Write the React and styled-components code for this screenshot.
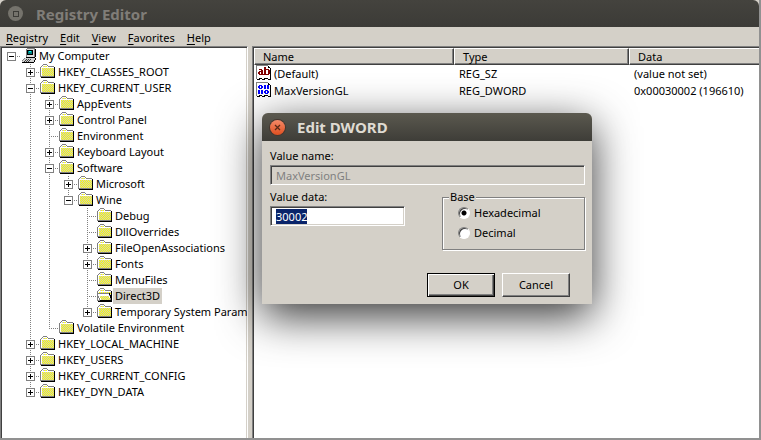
import React, { useEffect, useRef, useState } from 'react';
import styled, { createGlobalStyle, ThemeProvider } from 'styled-components';

const theme = {
   face: '#d4d0c8',
   light: '#ffffff',
   shadow: '#808080',
   dark: '#404040',
   text: '#000000',
   selection: '#0a246a',
   font: '"Noto Sans", "DejaVu Sans", sans-serif',
};

const GlobalStyle = createGlobalStyle`
   * {
      box-sizing: border-box;
   }
   body {
      margin: 0;
      font-family: ${({ theme }) => theme.font};
      font-size: 11px;
      line-height: 16px;
      color: ${({ theme }) => theme.text};
   }
   button, input {
      font: inherit;
      color: inherit;
   }
`;

const Window = styled.div`
   position: relative;
   display: flex;
   flex-direction: column;
   height: 100vh;
   background-color: ${({ theme }) => theme.face};
   border: solid #919191;
   border-width: 0 2px 2px 0;
   overflow: hidden;
`;

const TitleBar = styled.header`
   display: flex;
   align-items: center;
   flex: none;
   gap: ${({ $active }) => ($active ? '12px' : '13px')};
   height: ${({ $active }) => ($active ? '28px' : '27px')};
   padding: 0 8px;
   color: ${({ $active }) => ($active ? '#dfdbd2' : '#807d78')};
   background: ${({ $active }) => ($active ? 'linear-gradient(#5b594f, #3e3d38)' : 'linear-gradient(#44433e, #3c3b37)')};
   border-radius: 6px 6px 0 0;
   h1, h2 {
      margin: 0;
      font-size: 15px;
      line-height: 20px;
      font-weight: 700;
   }
`;

const WindowButton = styled.button`
   width: 15px;
   height: 15px;
   padding: 0;
   border: 0;
   border-radius: 50%;
   background: ${({ $close }) => ($close ? 'linear-gradient(#f58a68, #df4f20)' : '#75736c')};
   box-shadow: ${({ $close }) => ($close ? '0 0 0 1px #45362e' : 'none')};
   svg {
      display: block;
   }
`;

const MenuBar = styled.nav`
   display: flex;
   flex: none;
   gap: 12px;
   height: 19px;
   padding: 3px 6px 0;
   a {
      color: inherit;
      text-decoration: none;
   }
   u {
      text-underline-offset: 2px;
   }
`;

const Panes = styled.main`
   display: grid;
   grid-template-columns: 248px 1fr;
   column-gap: 4px;
   flex: 1;
   min-height: 0;
`;

const Pane = styled.section`
   min-width: 0;
   overflow: hidden;
   background-color: #fff;
   border-top: 1px solid ${({ theme }) => theme.shadow};
   border-left: 1px solid ${({ theme }) => theme.shadow};
   box-shadow: inset 1px 1px ${({ theme }) => theme.dark};
   padding: 1px 0 0 1px;
`;

const TreePane = styled(Pane)`
   border-right: 1px solid ${({ theme }) => theme.light};
   box-shadow: inset 1px 1px ${({ theme }) => theme.dark}, inset -1px 0 ${({ theme }) => theme.face};
   padding-right: 1px;
`;

const Tree = styled.ul`
   margin: 0;
   padding: 0;
   list-style: none;
`;

const TreeRow = styled.div`
   display: flex;
   height: 16px;
   white-space: nowrap;
   svg {
      flex: none;
   }
`;

const dots = (angle) => `repeating-linear-gradient(${angle}, #808080 0 1px, transparent 1px 2px)`;

const Guide = styled.span`
   display: flex;
   flex: none;
   width: 19px;
   height: 16px;
   padding: 4px 0 0 5px;
   background-image: ${dots('180deg')}, ${dots('180deg')}, ${dots('90deg')};
   background-repeat: no-repeat;
   background-position: 9px 0, 9px 8px, 9px 8px;
   background-size: ${({ $up, $down, $across }) => `1px ${$up ? 8 : 0}px, 1px ${$down ? 8 : 0}px, ${$across ? 10 : 0}px 1px`};
`;

const Toggle = styled.button`
   width: 9px;
   height: 9px;
   padding: 0;
   border: 1px solid ${({ theme }) => theme.shadow};
   background-color: #fff;
   svg {
      display: block;
   }
`;

const TreeLabel = styled.span`
   padding: 0 2px;
   background-color: ${({ theme, $selected }) => ($selected ? theme.face : 'transparent')};
`;

const ValueTable = styled.table`
   width: 100%;
   table-layout: fixed;
   border-collapse: separate;
   border-spacing: 0;
   th {
      height: 17px;
      padding: 0 0 0 8px;
      font-weight: 400;
      line-height: 14px;
      text-align: left;
      background-color: ${({ theme }) => theme.face};
      border: 1px solid ${({ theme }) => theme.dark};
      border-top-color: ${({ theme }) => theme.light};
      border-left-color: ${({ theme }) => theme.light};
      box-shadow: inset -1px -1px ${({ theme }) => theme.shadow};
   }
   th:last-child {
      border-right: 0;
      box-shadow: inset 0 -1px ${({ theme }) => theme.shadow};
   }
   td {
      height: 17px;
      padding: 0 0 0 5px;
      white-space: nowrap;
   }
   td:first-child {
      padding-left: 2px;
   }
`;

const Column = styled.col`
   width: ${({ $width }) => $width};
`;

const ValueName = styled.span`
   display: flex;
   gap: 2px;
   height: 17px;
   line-height: 17px;
`;

const Dialog = styled.div`
   position: absolute;
   left: 262px;
   top: 113px;
   width: 330px;
   background-color: ${({ theme }) => theme.face};
   border-radius: 6px 6px 0 0;
   box-shadow: 0 12px 44px rgba(0, 0, 0, 0.8);
`;

const Form = styled.form`
   display: grid;
   grid-template-columns: 135px 143px;
   justify-content: space-between;
   padding: 7px 7px 7px 8px;
`;

const Field = styled.div`
   display: flex;
   flex-direction: column;
   grid-column: ${({ $wide }) => ($wide ? '1 / -1' : 'auto')};
   padding-bottom: 4px;
   gap: 1px;
`;

const TextBox = styled.input`
   width: 100%;
   height: 20px;
   padding: 0 5px;
   border: 1px solid;
   border-color: ${({ theme }) => `${theme.shadow} ${theme.light} ${theme.light} ${theme.shadow}`};
   border-radius: 0;
   outline: none;
   background-color: ${({ theme, readOnly }) => (readOnly ? theme.face : '#fff')};
   color: ${({ theme, readOnly }) => (readOnly ? theme.shadow : theme.text)};
   box-shadow: inset 1px 1px ${({ theme }) => theme.dark}, inset -1px -1px ${({ theme }) => theme.face};
   &::selection {
      color: #fff;
      background-color: ${({ theme }) => theme.selection};
   }
`;

const GroupBox = styled.fieldset`
   display: flex;
   flex-direction: column;
   gap: 4px;
   height: 61px;
   margin: 0;
   padding: 0 15px;
   border: 1px solid ${({ theme }) => theme.shadow};
   box-shadow: 1px 1px ${({ theme }) => theme.light}, inset 1px 1px ${({ theme }) => theme.light};
   legend {
      margin-left: -9px;
      padding: 0 1px;
      background-color: ${({ theme }) => theme.face};
   }
`;

const RadioLabel = styled.label`
   display: flex;
   align-items: center;
   gap: 4px;
   height: 16px;
`;

const Radio = styled.input`
   appearance: none;
   width: 12px;
   height: 12px;
   margin: 0;
   border: 1px solid;
   border-color: ${({ theme }) => `${theme.shadow} ${theme.light} ${theme.light} ${theme.shadow}`};
   border-radius: 50%;
   background-color: #fff;
   box-shadow: inset 1px 1px ${({ theme }) => theme.dark};
   &:checked {
      background-image: radial-gradient(circle, #000 2px, transparent 3px);
   }
`;

const Actions = styled.div`
   display: flex;
   justify-content: flex-end;
   grid-column: 1 / -1;
   gap: 7px;
   padding: 23px 15px 0 0;
`;

const PushButton = styled.button`
   width: 68px;
   height: 24px;
   padding: 0;
   border: 1px solid;
   border-color: ${({ theme, $primary }) => ($primary ? '#000' : `${theme.light} ${theme.dark} ${theme.dark} ${theme.light}`)};
   border-radius: 0;
   background-color: ${({ theme }) => theme.face};
   box-shadow: ${({ theme, $primary }) => ($primary
      ? `inset 1px 1px ${theme.light}, inset -1px -1px ${theme.dark}, inset -2px -2px ${theme.shadow}`
      : `inset -1px -1px ${theme.shadow}`)};
`;

const FolderIcon = ({ open }) => (
   <svg width="16" height="16" viewBox="0 0 16 16" shapeRendering="crispEdges">
      <defs>
         <pattern id="dither" width="2" height="2" patternUnits="userSpaceOnUse">
            <rect width="2" height="2" fill="#ffff00" />
            <rect x="1" width="1" height="1" fill="#c8c8c8" />
            <rect y="1" width="1" height="1" fill="#c8c8c8" />
         </pattern>
      </defs>
      <path d="M0 3h1V2h1V1h1V0h4v1h1v1h6v11H0z" fill="#808080" />
      <path d="M1 3h13v9H1zM2 2h6v1H2zM3 1h4v1H3z" fill="#fff" />
      <path d="M2 4h12v8H2zM3 2h4v1H3z" fill="url(#dither)" />
      <path d="M14 3h1v11H1v-1h13z" fill="#000" />
      {open && (
         <>
            <path d="M0 5h12v1h1v3h1v3h1v1H3v-1H2v-2H1V7H0z" fill="#808080" />
            <path d="M1 6h11v2h1v4H3v-2H2V8H1z" fill="#fff" />
            <path d="M3 8h9v2h1v2H4v-2H3z" fill="url(#dither)" />
            <path d="M12 5h1v2h1v3h1v3H3v-1h11v-2h-1V7h-1z" fill="#000" />
         </>
      )}
   </svg>
);

const ComputerIcon = () => (
   <svg width="16" height="16" viewBox="0 0 16 16" shapeRendering="crispEdges">
      <path d="M5 1h1V0h8v9H5z" fill="#808080" />
      <path d="M6 1h7v8H6z" fill="#e0e0e0" />
      <path d="M6 2h6v5H6z" fill="#000" />
      <path d="M7 3h4v3H7z" fill="#008080" />
      <path d="M8 3h2v1H8z" fill="#00ffff" />
      <path d="M14 1h1v8h-1zM5 9h9v1H5z" fill="#000" />
      <path d="M4 10h10v1H4zM3 11h11v1H3zM2 12h11v1H2zM1 13h12v1H1z" fill="#d0d0d0" />
      <path d="M3 10h1v1H3zM2 11h1v1H2zM1 12h1v1H1z" fill="#808080" />
      <path d="M5 11h1v1H5zM7 11h1v1H7zM9 11h1v1H9zM4 12h1v1H4zM6 12h1v1H6zM8 12h1v1H8zM3 13h1v1H3zM5 13h1v1H5zM7 13h1v1H7z" fill="#404040" />
      <path d="M1 14h12v1H1zM13 12h1v2h-1zM14 10h1v2h-1z" fill="#000" />
   </svg>
);

const ValueIcon = ({ binary }) => (
   <svg width="16" height="16" viewBox="0 0 16 16" shapeRendering="crispEdges">
      <path d="M1 1h11l2 2v11h-2v-1h-2v1H7v-1H5v1H3v-1H1z" fill="#fff" />
      <path d="M0 0h12v1H1v13H0z" fill="#808080" />
      <path d="M12 1h1v1h1v1h1v12h-3v-1H9v1H6v-1H4v1H1v-1h2v-1h3v1h2v-1h4v1h2V3h-2z" fill="#000" />
      {binary ? (
         <path
            d="M3 3h3v1h1v2H6v1H3V6H2V4h1zM4 4v2h1V4zM8 3h2v4H8zM11 3h2v4h-2zM2 8h2v4H2zM5 8h2v4H5zM9 8h3v1h1v2h-1v1H9v-1H8V9h1zM10 9v2h1V9z"
            fill="#0000ff"
            fillRule="evenodd"
         />
      ) : (
         <path
            d="M3 4h3v1h1v4h1v1H3V9H2V7h1V6h2V5H3zM4 7v2h1V7zM8 2h2v2h3v1h1v4h-1v1H8zM10 5v4h2V5z"
            fill="#800000"
            fillRule="evenodd"
         />
      )}
   </svg>
);

const registry = {
   name: 'My Computer',
   icon: <ComputerIcon />,
   children: [
      { name: 'HKEY_CLASSES_ROOT', collapsed: true },
      {
         name: 'HKEY_CURRENT_USER',
         children: [
            { name: 'AppEvents', collapsed: true },
            { name: 'Control Panel', collapsed: true },
            { name: 'Environment' },
            { name: 'Keyboard Layout', collapsed: true },
            {
               name: 'Software',
               children: [
                  { name: 'Microsoft', collapsed: true },
                  {
                     name: 'Wine',
                     children: [
                        { name: 'Debug' },
                        { name: 'DllOverrides' },
                        { name: 'FileOpenAssociations', collapsed: true },
                        { name: 'Fonts', collapsed: true },
                        { name: 'MenuFiles' },
                        { name: 'Direct3D', selected: true },
                        { name: 'Temporary System Param', collapsed: true },
                     ],
                  },
               ],
            },
            { name: 'Volatile Environment' },
         ],
      },
      { name: 'HKEY_LOCAL_MACHINE', collapsed: true },
      { name: 'HKEY_USERS', collapsed: true },
      { name: 'HKEY_CURRENT_CONFIG', collapsed: true },
      { name: 'HKEY_DYN_DATA', collapsed: true },
   ],
};

const values = [
   { name: '(Default)', type: 'REG_SZ', data: '(value not set)' },
   { name: 'MaxVersionGL', type: 'REG_DWORD', data: '0x00030002 (196610)', binary: true },
];

const menus = ['Registry', 'Edit', 'View', 'Favorites', 'Help'];

// lines holds one flag per ancestor: true while that ancestor has siblings below
const TreeNode = ({ node, lines = [], root, last }) => {
   const [open, setOpen] = useState(!node.collapsed);
   const expandable = node.children || node.collapsed;

   return (
      <li>
         <TreeRow>
            {lines.map((line, i) => <Guide key={i} $up={line} $down={line} />)}
            <Guide $up={!root} $down={!last} $across>
               {expandable && (
                  <Toggle type="button" aria-label={node.name} aria-expanded={open} onClick={() => setOpen(!open)}>
                     <svg width="7" height="7" shapeRendering="crispEdges">
                        <path d={open ? 'M1 3h5v1H1z' : 'M1 3h5v1H1zM3 1h1v5H3z'} />
                     </svg>
                  </Toggle>
               )}
            </Guide>
            {node.icon || <FolderIcon open={node.selected} />}
            <TreeLabel $selected={node.selected}>{node.name}</TreeLabel>
         </TreeRow>
         {open && node.children && (
            <Tree>
               {node.children.map((child, i) => (
                  <TreeNode
                     key={child.name}
                     node={child}
                     lines={[...lines, !last]}
                     last={i === node.children.length - 1}
                  />
               ))}
            </Tree>
         )}
      </li>
   );
};

const ValueList = () => (
   <ValueTable>
      <colgroup>
         <Column $width="200px" />
         <Column $width="175px" />
         <Column $width="auto" />
      </colgroup>
      <thead>
         <tr>
            <th>Name</th>
            <th>Type</th>
            <th>Data</th>
         </tr>
      </thead>
      <tbody>
         {values.map(({ name, type, data, binary }) => (
            <tr key={name}>
               <td><ValueName><ValueIcon binary={binary} />{name}</ValueName></td>
               <td>{type}</td>
               <td>{data}</td>
            </tr>
         ))}
      </tbody>
   </ValueTable>
);

const EditDialog = () => {
   const dataRef = useRef(null);
   const [base, setBase] = useState('Hexadecimal');

   useEffect(() => {
      dataRef.current.focus();
      dataRef.current.select();
   }, []);

   return (
      <Dialog role="dialog" aria-labelledby="dialog-title">
         <TitleBar $active>
            <WindowButton type="button" $close aria-label="Close">
               <svg width="15" height="15"><path d="M5 5l5 5M10 5l-5 5" stroke="#5a2a18" strokeWidth="1.3" /></svg>
            </WindowButton>
            <h2 id="dialog-title">Edit DWORD</h2>
         </TitleBar>
         <Form onSubmit={(e) => e.preventDefault()}>
            <Field $wide>
               <label htmlFor="value-name">Value name:</label>
               <TextBox id="value-name" value="MaxVersionGL" readOnly />
            </Field>
            <Field>
               <label htmlFor="value-data">Value data:</label>
               <TextBox id="value-data" ref={dataRef} defaultValue="30002" />
            </Field>
            <GroupBox>
               <legend>Base</legend>
               {['Hexadecimal', 'Decimal'].map((name) => (
                  <RadioLabel key={name}>
                     <Radio type="radio" name="base" checked={base === name} onChange={() => setBase(name)} />
                     {name}
                  </RadioLabel>
               ))}
            </GroupBox>
            <Actions>
               <PushButton type="submit" $primary>OK</PushButton>
               <PushButton type="button">Cancel</PushButton>
            </Actions>
         </Form>
      </Dialog>
   );
};

const App = () => (
   <ThemeProvider theme={theme}>
      <GlobalStyle />
      <Window>
         <TitleBar>
            <WindowButton type="button" aria-label="Maximize">
               <svg width="15" height="15" shapeRendering="crispEdges"><path d="M5 5h5v5H5z" fill="none" stroke="#3c3b37" /></svg>
            </WindowButton>
            <h1>Registry Editor</h1>
         </TitleBar>
         <MenuBar>
            {menus.map((menu) => <a key={menu} href="#menu"><u>{menu[0]}</u>{menu.slice(1)}</a>)}
         </MenuBar>
         <Panes>
            <TreePane>
               <Tree><TreeNode node={registry} root last /></Tree>
            </TreePane>
            <Pane><ValueList /></Pane>
         </Panes>
         <EditDialog />
      </Window>
   </ThemeProvider>
);

export default App;
